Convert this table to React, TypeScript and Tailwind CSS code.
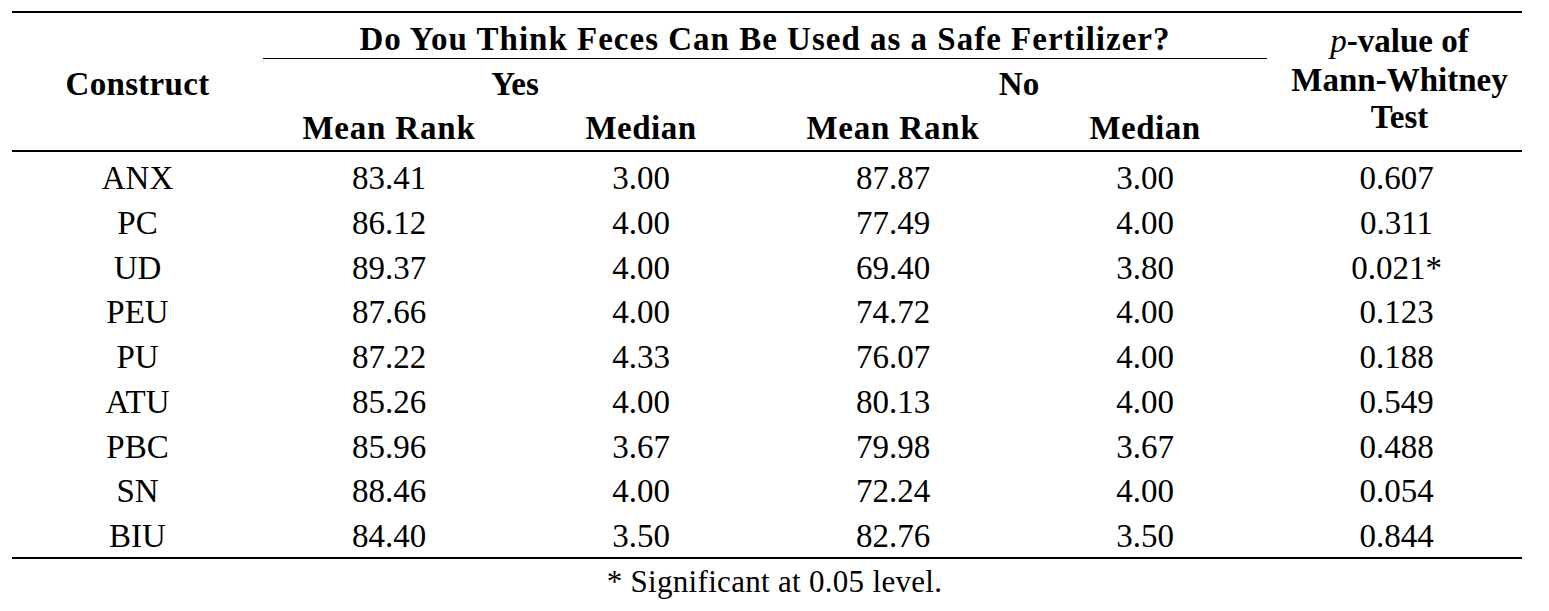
const rows = [
  ["ANX", "83.41", "3.00", "87.87", "3.00", "0.607"],
  ["PC", "86.12", "4.00", "77.49", "4.00", "0.311"],
  ["UD", "89.37", "4.00", "69.40", "3.80", "0.021*"],
  ["PEU", "87.66", "4.00", "74.72", "4.00", "0.123"],
  ["PU", "87.22", "4.33", "76.07", "4.00", "0.188"],
  ["ATU", "85.26", "4.00", "80.13", "4.00", "0.549"],
  ["PBC", "85.96", "3.67", "79.98", "3.67", "0.488"],
  ["SN", "88.46", "4.00", "72.24", "4.00", "0.054"],
  ["BIU", "84.40", "3.50", "82.76", "3.50", "0.844"],
];

const cols = "grid grid-cols-[251px_252px_252px_252px_252px_251px]";

export default function App() {
  return (
    <div className="w-[1549px] h-[611px] bg-white text-black font-['Liberation_Serif',serif] text-[33px]">
      <div className="pt-[11px] pl-[12px]">
        <div className="w-[1510px]">
          {/* header */}
          <div className={`${cols} border-t-2 border-b-2 border-black font-bold text-center`}>
            <div className="col-start-2 col-span-4 mr-[4px] h-[46px] pt-[7px] leading-[38px] tracking-[1px] border-b-[1.5px] border-black">
              Do You Think Feces Can Be Used as a Safe Fertilizer?
            </div>
            <div className="col-start-6 row-start-1 row-span-3 pt-[9px] pl-[6px] leading-[39px]">
              <div>
                <span className="italic font-normal">p</span>-value of
              </div>
              <div>Mann-Whitney</div>
              <div className="-mt-[2px]">Test</div>
            </div>
            <div className="col-start-1 row-start-2 h-[46px] pt-[3px] leading-[44px] tracking-[0.3px]">Construct</div>
            <div className="col-start-2 col-span-2 row-start-2 h-[46px] pt-[3px] leading-[44px]">Yes</div>
            <div className="col-start-4 col-span-2 row-start-2 h-[46px] pt-[3px] leading-[44px]">No</div>
            <div className="col-start-2 row-start-3 h-[45px] pt-[2px] leading-[43px] tracking-[0.8px]">Mean Rank</div>
            <div className="col-start-3 row-start-3 h-[45px] pt-[2px] leading-[43px] tracking-[0.5px]">Median</div>
            <div className="col-start-4 row-start-3 h-[45px] pt-[2px] leading-[43px] tracking-[0.8px]">Mean Rank</div>
            <div className="col-start-5 row-start-3 h-[45px] pt-[2px] leading-[43px] tracking-[0.5px]">Median</div>
          </div>

          {/* body */}
          <div className="pt-[2px] border-b-2 border-black">
            {rows.map((r) => (
              <div key={r[0]} className={`${cols} h-[44.75px] leading-[48px] text-center`}>
                {r.map((c, i) => (
                  <div key={i}>{c}</div>
                ))}
              </div>
            ))}
          </div>
        </div>
      </div>
      <div className="pt-[3px] text-center text-[31px] leading-[40px] tracking-[0.3px]">* Significant at 0.05 level.</div>
    </div>
  );
}
